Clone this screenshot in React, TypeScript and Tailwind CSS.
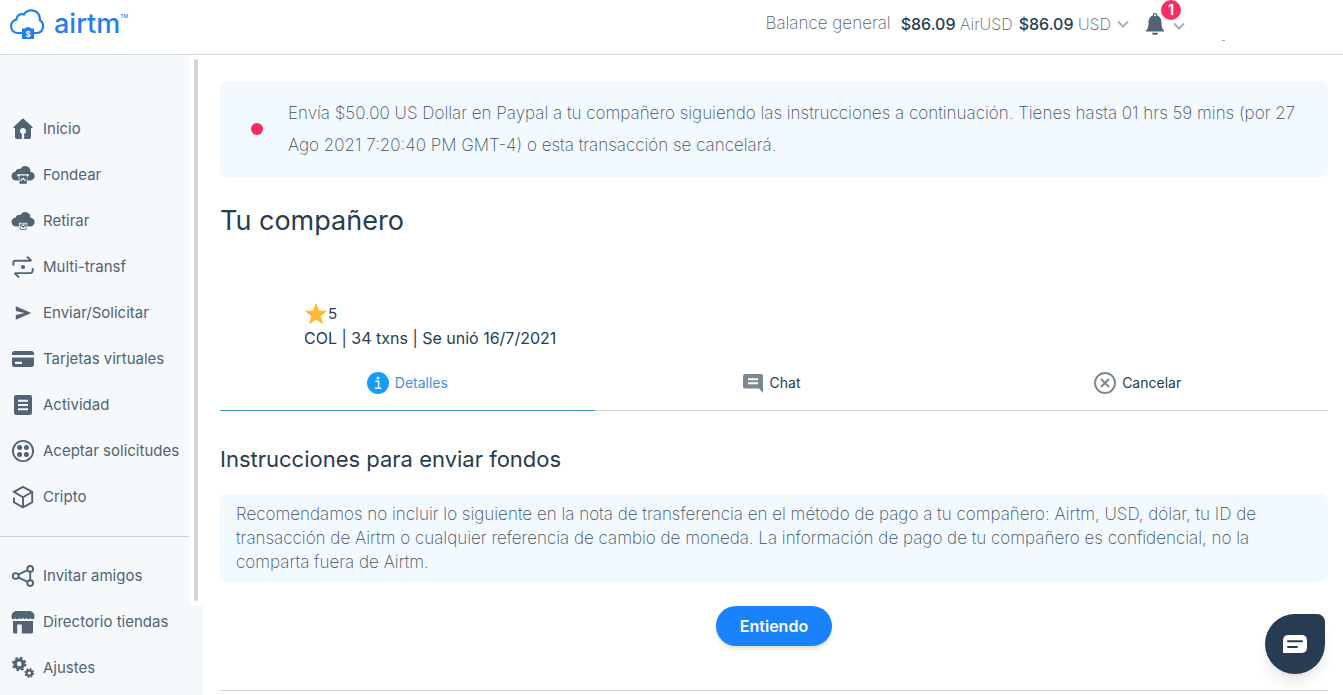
import type { ReactNode } from "react";

const Icon = ({ children, className = "size-6" }: { children: ReactNode; className?: string }) => (
  <svg viewBox="0 0 24 24" className={className} fill="currentColor" aria-hidden="true">
    {children}
  </svg>
);

const CLOUD = "M5.500 17.500a4.500 4.500 0 0 1-.8-9C5.200 6.200 7.300 5.200 9.400 5.900A5.300 5.300 0 0 1 19.400 8.700a4.400 4.400 0 0 1-.3 8.800z";

const HomeIcon = () => (
  <Icon>
    <path
      fillRule="evenodd"
      d="M12 1.300 22 10.500l-1.300.6H20V20a2 2 0 0 1-2 2h-4.800v-5.300a3 3 0 1 0-2.400 0V22H6a2 2 0 0 1-2-2v-8.900h-.700L2 10.500z"
    />
  </Icon>
);

const FundIcon = () => (
  <Icon>
    <path d={CLOUD} />
    <path d="M6.300 11.300h11.400v2h-1.500v7.700H7.800v-7.700H6.300z" fill="#f5f9fc" />
    <path d="M8.500 12.500h7.300v8.300H8.500z" />
    <path d="m9.700 17.800 2.400-2.400 2.400 2.400" fill="none" stroke="#f5f9fc" strokeWidth="1.300" />
  </Icon>
);

const WithdrawIcon = () => (
  <Icon>
    <path d={CLOUD} />
    <path d="M8 13.800h8.200v7.400H8z" fill="#f5f9fc" />
    <path d="M9.200 15h5.900v5.500H9.200z" fill="none" stroke="currentColor" strokeWidth=".8" />
    <path d="m9.600 15.600 2.600 2.500 2.600-2.500" fill="none" stroke="currentColor" strokeWidth="1.200" />
  </Icon>
);

const MultiIcon = () => (
  <Icon>
    <g fill="none" stroke="currentColor" strokeWidth="1.900">
      <path d="M2.300 10.500V8a2.300 2.300 0 0 1 2.300-2.300H20M16 1.800l4.600 4.100" />
      <path d="M21.700 13v2.800a2.300 2.300 0 0 1-2.300 2.300H3.600M8 22.200l-4.500-4.100" />
    </g>
    <circle cx="12" cy="12" r="2.100" />
  </Icon>
);

const SendIcon = () => (
  <Icon>
    <path d="M4.800 5.200 20.300 12 4.800 18.800v-4.700L13.500 12 4.800 9.900z" />
  </Icon>
);

const CardIcon = () => (
  <Icon>
    <path d="M3.500 4h17A2.500 2.500 0 0 1 23 6.500V8H1V6.500A2.500 2.500 0 0 1 3.500 4z" />
    <path fillRule="evenodd" d="M1 10.500h22v7a2.500 2.500 0 0 1-2.500 2.500h-17A2.500 2.500 0 0 1 1 17.500zM4 14.700v2.200h7v-2.200z" />
  </Icon>
);

const ActivityIcon = () => (
  <Icon>
    <rect x="3" y="2" width="18" height="20" rx="2" />
    <path d="M7 7.800h10M7 12h10M7 16.200h10" stroke="#f5f9fc" strokeWidth="1.900" />
  </Icon>
);

const RequestsIcon = () => (
  <Icon>
    <circle cx="12" cy="12" r="10.100" fill="none" stroke="currentColor" strokeWidth="1.900" />
    <circle cx="8.600" cy="8.600" r="2.500" />
    <circle cx="15.400" cy="8.600" r="2.500" />
    <circle cx="8.600" cy="15.400" r="2.500" />
    <circle cx="15.400" cy="15.400" r="2.500" />
  </Icon>
);

const CryptoIcon = () => (
  <Icon>
    <path
      d="M2.900 12.500v4.800L12 22.300l9.200-5V6.800L12 1.800 2.900 6.800 12 12.200v10M12 12.200l9-5.200"
      fill="none"
      stroke="currentColor"
      strokeWidth="1.900"
    />
  </Icon>
);

const InviteIcon = () => (
  <Icon>
    <g fill="none" stroke="currentColor" strokeWidth="1.900">
      <circle cx="4.700" cy="12" r="2.900" />
      <circle cx="19.200" cy="4.900" r="2.900" />
      <circle cx="19.200" cy="19.100" r="2.900" />
      <path d="m7.300 10.700 9.200-4.500M7.300 13.300l9.300 4.500M19.200 7.800v8.400" />
    </g>
  </Icon>
);

const StoreIcon = () => (
  <Icon>
    <path d="M4.500 1h15A6 6 0 0 1 23.500 7a1.900 1.900 0 0 1-3.800.7 2 2 0 0 1-3.900 0 2 2 0 0 1-3.800 0 2 2 0 0 1-3.800 0 2 2 0 0 1-3.900 0A1.900 1.900 0 0 1 .5 7 6 6 0 0 1 4.500 1z" />
    <path fillRule="evenodd" d="M2 11h20v11a1.500 1.500 0 0 1-1.500 1.500H10.800v-9H6.200v9H3.500A1.500 1.500 0 0 1 2 22z" />
  </Icon>
);

const SettingsIcon = () => (
  <Icon>
    <circle cx="8.200" cy="8" r="4.100" fill="none" stroke="currentColor" strokeWidth="3.400" />
    <circle cx="8.200" cy="8" r="6.300" fill="none" stroke="currentColor" strokeWidth="1.800" strokeDasharray="2.600 2.348" />
    <circle cx="18.300" cy="17" r="2.700" fill="none" stroke="currentColor" strokeWidth="2.200" />
    <circle cx="18.300" cy="17" r="4.200" fill="none" stroke="currentColor" strokeWidth="1.500" strokeDasharray="1.700 1.599" />
  </Icon>
);

const ChevronIcon = () => (
  <svg viewBox="0 0 12 8" className="h-2 w-3" fill="none" stroke="#a7afb7" strokeWidth="2" aria-hidden="true">
    <path d="m1 1.500 5 5 5-5" />
  </svg>
);

const mainLinks = [
  { label: "Inicio", icon: HomeIcon },
  { label: "Fondear", icon: FundIcon },
  { label: "Retirar", icon: WithdrawIcon },
  { label: "Multi-transf", icon: MultiIcon },
  { label: "Enviar/Solicitar", icon: SendIcon },
  { label: "Tarjetas virtuales", icon: CardIcon },
  { label: "Actividad", icon: ActivityIcon },
  { label: "Aceptar solicitudes", icon: RequestsIcon },
  { label: "Cripto", icon: CryptoIcon },
];

const extraLinks = [
  { label: "Invitar amigos", icon: InviteIcon },
  { label: "Directorio tiendas", icon: StoreIcon },
  { label: "Ajustes", icon: SettingsIcon },
];

const NavList = ({ links }: { links: typeof mainLinks }) => (
  <ul>
    {links.map(({ label, icon: LinkIcon }) => (
      <li key={label}>
        <a href="#" className="flex h-[46px] items-center gap-2 pl-[11px] text-[15px] whitespace-nowrap text-[#536373]">
          <LinkIcon />
          {label}
        </a>
      </li>
    ))}
  </ul>
);

const Header = () => (
  <header className="flex h-[55px] border-b border-[#d5d7de] bg-white">
    <a href="#" className="flex h-12 flex-1 items-center gap-2 pl-2 text-[#1f80f0]">
      <svg viewBox="0 0 38 32" className="h-8 w-[38px]" aria-hidden="true">
        <path
          d="M14.500 25H9.500a6.800 6.800 0 0 1-1.200-13.400c.2-4.200 4.200-6.400 7.600-5.200C20.500-.2 30.500 1.700 31.800 9.800c.1.900.1 1.700 0 2.500 5.200 2.500 4.200 12-2.800 12.700h-3"
          fill="none"
          stroke="currentColor"
          strokeWidth="2.200"
        />
        <path d="M14 20.500h3l1-1.300h4l1 1.300h3V31H14z" fill="currentColor" />
        <text x="20" y="29" textAnchor="middle" fontSize="8" fontWeight="700" fill="#fff">
          $
        </text>
      </svg>
      <span className="flex items-start text-[27px] leading-8 font-medium">
        airtm<span className="text-[5px] leading-4">TM</span>
      </span>
    </a>
    <div className="flex h-12 items-center pr-[118px] text-base font-extralight text-[#536373]">
      <button type="button" className="flex items-center gap-1.5 whitespace-nowrap">
        <span className="pr-1 text-[17px]">Balance general</span>
        <span><strong className="font-medium text-[#273c50]">$86.09</strong> AirUSD</span>
        <span><strong className="font-medium text-[#273c50]">$86.09</strong> USD</span>
        <ChevronIcon />
      </button>
      <button type="button" aria-label="Notificaciones" className="relative ml-4 flex items-center gap-2">
        <svg viewBox="0 0 20 24" className="h-6 w-5" fill="#536373" aria-hidden="true">
          <path
            fillRule="evenodd"
            d="M10 1a2.300 2.300 0 0 1 2.300 2.400C15.500 4.500 16.500 7.500 16.500 11c0 4 .7 5.500 2.300 7.200.5.600.2 1.300-.6 1.300H1.800c-.8 0-1.100-.700-.6-1.300C2.800 16.500 3.500 15 3.500 11c0-3.500 1-6.500 4.200-7.600A2.300 2.300 0 0 1 10 1zm0 1.200a1 1 0 1 0 0 2 1 1 0 0 0 0-2zM7 20.700h6a3 2.200 0 0 1-6 0z"
          />
        </svg>
        <span className="pt-1"><ChevronIcon /></span>
        <span className="absolute -top-3 left-4 flex size-5 items-center justify-center rounded-full bg-[#fa2d5f] text-sm font-bold text-white">
          1
        </span>
      </button>
      <span className="mb-[7px] ml-[37px] h-px w-[3px] self-end bg-[#7cc58a]" />
    </div>
  </header>
);

const Sidebar = () => (
  <nav className="relative w-[203px] shrink-0 bg-[#f5f9fc] pt-[51px]">
    <NavList links={mainLinks} />
    <hr className="my-4 mr-[14px] border-[#cdd3da]" />
    <NavList links={extraLinks} />
    <div className="absolute top-0 right-0 bottom-[90px] flex w-[14px] rounded-b bg-white px-[5px] pt-1 pb-1">
      <div className="w-1 rounded-full bg-[#d3d4dc]" />
    </div>
  </nav>
);

const Tabs = () => (
  <div role="tablist" className="mt-1.5 flex h-[55px] border-b border-[#d3d6d9] text-sm text-[#273c50]">
    <button type="button" role="tab" aria-selected="true" className="-mb-px flex flex-auto items-center justify-center gap-1.5 border-b border-[#3d97c9] text-[#3f8fee]">
      <svg viewBox="0 0 22 22" className="size-[22px]" aria-hidden="true">
        <circle cx="11" cy="11" r="11" fill="#189bfc" />
        <circle cx="11" cy="6.200" r="1.400" fill="#fff" />
        <path d="M8.500 9.300h3.100v6.600M8 16.200h6.300" fill="none" stroke="#fff" strokeWidth="1.500" />
      </svg>
      Detalles
    </button>
    <button type="button" role="tab" aria-selected="false" className="flex flex-auto items-center justify-center gap-1.5">
      <svg viewBox="0 0 22 22" className="size-[22px]" aria-hidden="true">
        <path d="M3 2h16a2 2 0 0 1 2 2v17l-4-4.500H3a2 2 0 0 1-2-2V4a2 2 0 0 1 2-2z" fill="#7c8994" />
        <path d="M6 7.200h10M6 11.200h10" stroke="#fff" strokeWidth="1.900" />
      </svg>
      Chat
    </button>
    <button type="button" role="tab" aria-selected="false" className="flex flex-auto items-center justify-center gap-1.5">
      <svg viewBox="0 0 22 22" className="size-[22px]" fill="none" stroke="#7c8790" strokeWidth="1.900" aria-hidden="true">
        <circle cx="11" cy="11" r="10" />
        <path d="m7 7 8 8M15 7l-8 8" />
      </svg>
      Cancelar
    </button>
  </div>
);

const App = () => {
  return (
    <div className="flex min-h-screen flex-col bg-white font-['Inter',sans-serif]">
      <Header />
      <div className="flex flex-1">
        <Sidebar />
        <main className="min-w-0 flex-1 pt-[26px] pr-[15px] pl-[17px] text-[#273c50]">
          <div className="flex items-center rounded-md bg-[#f2f9ff] py-4 pr-5 pl-[31px]">
            <span className="size-3 shrink-0 rounded-full bg-[#fa2d5f]" />
            <p className="pl-[25px] text-[17px] leading-8 font-extralight text-[#3f5163]">
              Envía $50.00 US Dollar en Paypal a tu compañero siguiendo las instrucciones a continuación. Tienes hasta
              01 hrs 59 mins (por 27 Ago 2021 7:20:40 PM GMT-4) o esta transacción se cancelará.
            </p>
          </div>

          <h1 className="mt-6 text-[27px] leading-10">Tu compañero</h1>

          <div className="mt-[61px] pl-[84px] text-base">
            <div className="flex items-center text-[15px] leading-6">
              <svg viewBox="0 0 24 24" className="size-6" fill="#ffb92e" aria-hidden="true">
                <path d="m12 1.800 2.600 7.200 7.700.2-6.100 4.700 2.300 7.500-6.500-4.400-6.500 4.400 2.300-7.500L1.700 9.200l7.700-.2z" stroke="#ffb92e" strokeLinejoin="round" />
              </svg>
              5
            </div>
            <p>COL | 34 txns | Se unió 16/7/2021</p>
          </div>

          <Tabs />

          <h2 className="mt-8 text-[22px] leading-8">Instrucciones para enviar fondos</h2>

          <p className="mt-[19px] rounded-md bg-[#f2f9ff] py-2 pr-12 pl-4 text-[17px] leading-6 font-extralight text-[#3f5163]">
            Recomendamos no incluir lo siguiente en la nota de transferencia en el método de pago a tu compañero: Airtm,
            USD, dólar, tu ID de transacción de Airtm o cualquier referencia de cambio de moneda. La información de pago
            de tu compañero es confidencial, no la comparta fuera de Airtm.
          </p>

          <div className="flex justify-center border-b border-[#d3d6d9] pt-6 pb-11">
            <button type="button" className="h-10 rounded-full bg-[#1a82fb] px-6 text-base font-semibold text-white shadow-md">
              Entiendo
            </button>
          </div>
        </main>
      </div>

      <button
        type="button"
        aria-label="Abrir chat"
        className="fixed right-[18px] bottom-[21px] flex size-[60px] items-center justify-center rounded-[30px] rounded-tr-lg bg-[#273c52] shadow-lg"
      >
        <svg viewBox="0 0 24 18" className="h-[18px] w-6" aria-hidden="true">
          <path d="M5 0h14a5 5 0 0 1 5 5v8a5 5 0 0 1-5 5H0V5a5 5 0 0 1 5-5z" fill="#fff" />
          <path d="M5 6.300h14M5 12h9" stroke="#273c52" strokeWidth="1.900" strokeLinecap="round" />
        </svg>
      </button>
    </div>
  );
};

export default App;
